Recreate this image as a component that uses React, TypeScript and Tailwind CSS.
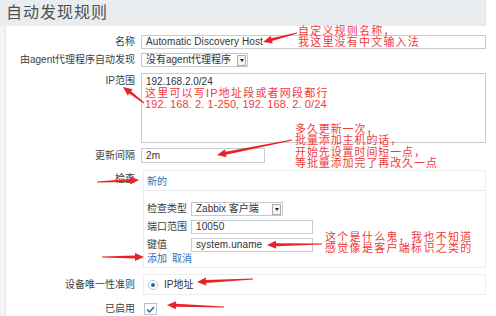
import React from "react";

type Pt = [number, number];

function arrowPoints(tail: Pt, tip: Pt): string {
  const dx = tip[0] - tail[0];
  const dy = tip[1] - tail[1];
  const len = Math.hypot(dx, dy);
  const ux = dx / len;
  const uy = dy / len;
  const nx = -uy;
  const ny = ux;
  const hl = 9;
  const hw = 4;
  const w0 = 0.5;
  const w1 = 1.5;
  const bx = tip[0] - ux * hl;
  const by = tip[1] - uy * hl;
  const pts: Pt[] = [
    [tail[0] + nx * w0, tail[1] + ny * w0],
    [bx + nx * w1, by + ny * w1],
    [bx + nx * hw, by + ny * hw],
    [tip[0], tip[1]],
    [bx - nx * hw, by - ny * hw],
    [bx - nx * w1, by - ny * w1],
    [tail[0] - nx * w0, tail[1] - ny * w0],
  ];
  return pts.map((p) => `${p[0].toFixed(1)},${p[1].toFixed(1)}`).join(" ");
}

const arrows: [Pt, Pt][] = [
  [[297, 33], [263, 42]],
  [[144, 103], [123, 87]],
  [[292, 140], [217, 155]],
  [[97, 182], [139, 180]],
  [[322, 244], [267, 245]],
  [[102, 257], [144, 257]],
  [[253, 279], [197, 282]],
  [[224, 307], [167, 305]],
];

function Label({ children, className = "" }: { children: React.ReactNode; className?: string }) {
  return (
    <div className={`w-[129px] shrink-0 pr-0 text-right text-[10px] leading-[12px] text-[#3f3f3f] ${className}`}>
      {children}
    </div>
  );
}

function Select({ text, className = "" }: { text: string; className?: string }) {
  return (
    <div className={`flex h-[14px] items-center justify-between border border-[#c4c8cc] bg-white pl-[4px] pr-[1px] text-[10px] leading-[12px] ${className}`}>
      <span className="text-[10px] leading-[12px] text-[#333]">{text}</span>
      <div className="flex h-[11px] w-[9px] items-center justify-center border border-[#a9adb1] bg-[#f4f4f4]">
        <div className="h-0 w-0 border-x-[2.5px] border-t-[3px] border-x-transparent border-t-[#222]" />
      </div>
    </div>
  );
}

function Input({ text, className = "" }: { text: string; className?: string }) {
  return (
    <div className={`flex h-[14px] items-center border border-[#c9cdd1] bg-white pl-[4px] text-[10px] leading-[12px] ${className}`}>
      <span className="text-[10px] leading-[12px] text-[#333] tracking-[0.1px]">{text}</span>
    </div>
  );
}

export default function App() {
  return (
    <div className="relative h-[316px] w-[496px] overflow-hidden bg-white font-['Liberation_Sans','Noto_Sans_CJK_SC',sans-serif]">
      <div className="w-[486px]">
        <div className="flex h-[26px] items-center border-r border-[#dde1e4] bg-[#e9edf0] pl-[6px]">
          <span className="text-[16px] leading-[18px] tracking-[1px] text-[#505050]">自动发现规则</span>
        </div>
        <div className="flex h-[290px]">
          <div className="w-[5px] shrink-0 bg-[#f1f3f5]" />
          <div className="flex-1 border-l border-[#e3e6e9] bg-white pt-[9px]">
            {/* 名称 */}
            <div className="mb-[4px] flex items-center">
              <Label>名称</Label>
              <Input text="Automatic Discovery Host" className="ml-[6px] flex-1" />
            </div>
            {/* agent */}
            <div className="mb-[6px] flex items-center">
              <Label>由agent代理程序自动发现</Label>
              <Select text="没有agent代理程序" className="ml-[6px] w-[107px]" />
            </div>
            {/* IP范围 */}
            <div className="mb-[5px] flex items-start">
              <Label className="pt-[2px]">IP范围</Label>
              <div className="ml-[6px] h-[70px] flex-1 border border-[#c9cdd1] bg-white pl-[4px] pt-[2px] text-[10px] leading-[12px] text-[#333]">
                192.168.2.0/24
              </div>
            </div>
            {/* 更新间隔 */}
            <div className="mb-[7px] flex items-center">
              <Label>更新间隔</Label>
              <Input text="2m" className="ml-[6px] h-[15px] w-[124px]" />
            </div>
            {/* 检查 */}
            <div className="flex items-start">
              <Label className="pt-[3px]">检查</Label>
              <div className="ml-[8px] flex-1 border border-[#eceff1] text-[10px] leading-[12px]">
                <div className="flex h-[19px] items-center pl-[3px] pt-[2px]">
                  <span className="text-[10px] leading-[12px] text-[#2f6fb8]">新的</span>
                </div>
                <div className="border-t border-[#e6e9ec] pb-[3px] pl-[3px] pt-[11px]">
                  <div className="mb-[4px] flex items-center">
                    <span className="w-[44px] text-[10px] leading-[12px] text-[#3f3f3f]">检查类型</span>
                    <Select text="Zabbix 客户端" className="w-[92px]" />
                  </div>
                  <div className="mb-[4px] flex items-center">
                    <span className="w-[44px] text-[10px] leading-[12px] text-[#3f3f3f]">端口范围</span>
                    <Input text="10050" className="w-[122px]" />
                  </div>
                  <div className="mb-[2px] flex items-center">
                    <span className="w-[44px] text-[10px] leading-[12px] text-[#3f3f3f]">键值</span>
                    <Input text="system.uname" className="w-[122px]" />
                  </div>
                  <div className="flex h-[10px] items-center gap-[5px]">
                    <span className="text-[10px] leading-[10px] text-[#2f6fb8]">添加</span>
                    <span className="text-[10px] leading-[10px] text-[#2f6fb8]">取消</span>
                  </div>
                </div>
              </div>
            </div>
            {/* 设备唯一性准则 */}
            <div className="mt-[6px] flex items-center">
              <Label>设备唯一性准则</Label>
              <div className="ml-[8px] flex h-[21px] flex-1 items-center gap-[6px] border border-[#eceff1] pl-[4px]">
                <div className="flex h-[10px] w-[10px] items-center justify-center rounded-full border border-[#b9c6d3] bg-white">
                  <div className="h-[4px] w-[4px] rounded-full bg-[#2c66ad]" />
                </div>
                <span className="text-[10px] leading-[12px] text-[#333]">IP地址</span>
              </div>
            </div>
            {/* 已启用 */}
            <div className="mt-[8px] flex items-center">
              <Label>已启用</Label>
              <div className="ml-[9px] flex h-[12px] w-[13px] items-center justify-center border border-[#b7c3cf] bg-white">
                <svg width="9" height="7" viewBox="0 0 9 7">
                  <path d="M1 3.5 L3.5 6 L8 1" fill="none" stroke="#2c5f9e" strokeWidth="1.4" />
                </svg>
              </div>
            </div>
          </div>
        </div>
      </div>

      {/* annotations */}
      <div className="absolute left-[298px] top-[26px] text-[11px] leading-[11px] tracking-[1.2px] text-[#f03b3b]">
        <div>自定义规则名称，</div>
        <div>我这里没有中文输入法</div>
      </div>
      <div className="absolute left-[145px] top-[88px] text-[11px] leading-[11px] text-[#f03b3b]">
        <div className="tracking-[1.2px]">这里可以写IP地址段或者网段都行</div>
        <div className="tracking-[0.1px]">192. 168. 2. 1-250, 192. 168. 2. 0/24</div>
      </div>
      <div className="absolute left-[295px] top-[124px] text-[11px] leading-[11.3px] tracking-[0.9px] text-[#f03b3b]">
        <div>多久更新一次，</div>
        <div>批量添加主机的话，</div>
        <div>开始先设置时间短一点，</div>
        <div>等批量添加完了再改久一点</div>
      </div>
      <div className="absolute left-[325px] top-[232px] text-[11px] leading-[11px] tracking-[1.3px] text-[#f03b3b]">
        <div>这个是什么鬼，我也不知道</div>
        <div>感觉像是客户端标识之类的</div>
      </div>

      <svg className="pointer-events-none absolute left-0 top-0" width="496" height="316">
        {arrows.map(([t, p], i) => (
          <polygon key={i} points={arrowPoints(t, p)} fill="#e8242b" />
        ))}
      </svg>
    </div>
  );
}
